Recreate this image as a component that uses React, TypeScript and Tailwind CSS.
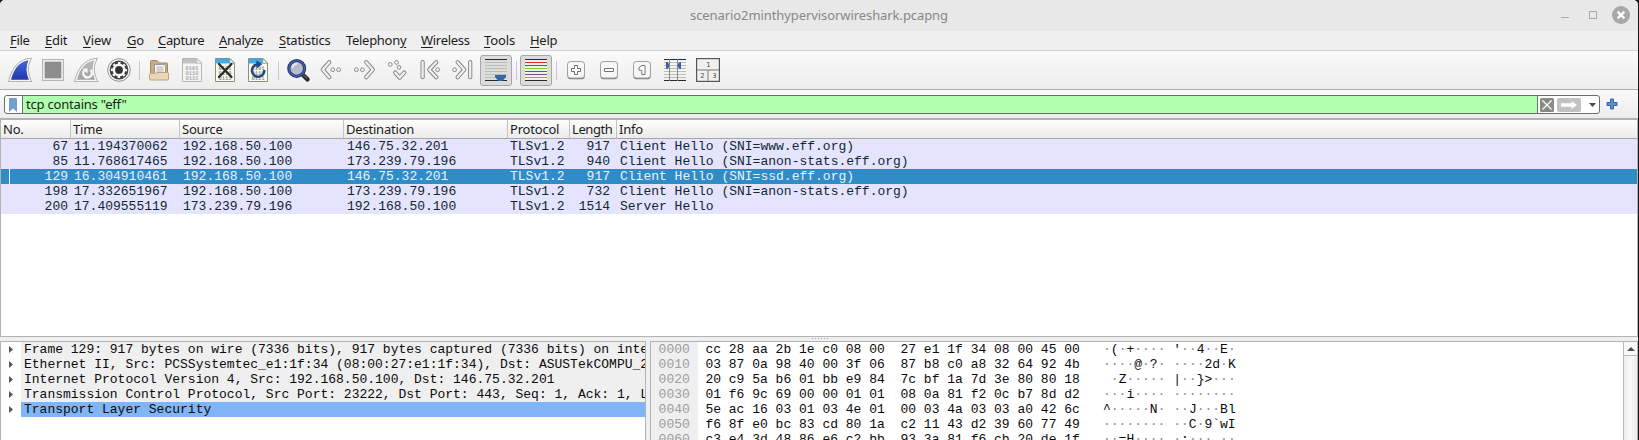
import React from "react";

const UI = "font-['Noto_Sans',sans-serif]";
const MONO = "font-['Liberation_Mono',monospace] text-[13px] leading-[15px] whitespace-pre";

const MENUS = [
  { label: "File", key: 0, box: "w-[35px]", text: "tracking-[-0.3px]" },
  { label: "Edit", key: 0, box: "w-[38px]", text: "tracking-[-0.25px]" },
  { label: "View", key: 0, box: "w-[44px]", text: "tracking-[-0.1px]" },
  { label: "Go", key: 0, box: "w-[31px]", text: "tracking-[-0.3px]" },
  { label: "Capture", key: 0, box: "w-[61px]", text: "tracking-[-0.35px]" },
  { label: "Analyze", key: 0, box: "w-[60px]", text: "tracking-[-0.4px]" },
  { label: "Statistics", key: 0, box: "w-[67px]", text: "tracking-[-0.25px]" },
  { label: "Telephony", key: 8, box: "w-[75px]", text: "tracking-[-0.3px]" },
  { label: "Wireless", key: 0, box: "w-[63px]", text: "tracking-[-0.3px]" },
  { label: "Tools", key: 0, box: "w-[46px]", text: "tracking-[-0.1px]" },
  { label: "Help", key: 0, box: "w-[40px]", text: "tracking-[-0.3px]" },
];

const PACKETS = [
  ["67", "11.194370062", "192.168.50.100", "146.75.32.201", "TLSv1.2", "917", "Client Hello (SNI=www.eff.org)"],
  ["85", "11.768617465", "192.168.50.100", "173.239.79.196", "TLSv1.2", "940", "Client Hello (SNI=anon-stats.eff.org)"],
  ["129", "16.304910461", "192.168.50.100", "146.75.32.201", "TLSv1.2", "917", "Client Hello (SNI=ssd.eff.org)"],
  ["198", "17.332651967", "192.168.50.100", "173.239.79.196", "TLSv1.2", "732", "Client Hello (SNI=anon-stats.eff.org)"],
  ["200", "17.409555119", "173.239.79.196", "192.168.50.100", "TLSv1.2", "1514", "Server Hello"],
];
const SELECTED = "129";

const TREE = [
  "Frame 129: 917 bytes on wire (7336 bits), 917 bytes captured (7336 bits) on inte",
  "Ethernet II, Src: PCSSystemtec_e1:1f:34 (08:00:27:e1:1f:34), Dst: ASUSTekCOMPU_2",
  "Internet Protocol Version 4, Src: 192.168.50.100, Dst: 146.75.32.201",
  "Transmission Control Protocol, Src Port: 23222, Dst Port: 443, Seq: 1, Ack: 1, L",
  "Transport Layer Security",
];

const HEX = [
  ["0000", "cc 28 aa 2b 1e c0 08 00  27 e1 1f 34 08 00 45 00", "·(·+···· '··4··E·"],
  ["0010", "03 87 0a 98 40 00 3f 06  87 b8 c0 a8 32 64 92 4b", "····@·?· ····2d·K"],
  ["0020", "20 c9 5a b6 01 bb e9 84  7c bf 1a 7d 3e 80 80 18", " ·Z····· |··}>···"],
  ["0030", "01 f6 9c 69 00 00 01 01  08 0a 81 f2 0c b7 8d d2", "···i···· ········"],
  ["0040", "5e ac 16 03 01 03 4e 01  00 03 4a 03 03 a0 42 6c", "^·····N· ··J···Bl"],
  ["0050", "f6 8f e0 bc 83 cd 80 1a  c2 11 43 d2 39 60 77 49", "········ ··C·9`wI"],
  ["0060", "c3 e4 3d 48 86 e6 c2 bb  93 3a 81 f6 cb 20 de 1f", "··=H···· ·:··· ··"],
];

function Icon({ children }: { children: React.ReactNode }) {
  return (
    <svg className="h-[38px] w-[33px] shrink-0" viewBox="0 0 33 38" fill="none">
      {children}
    </svg>
  );
}

function Separator({ wide = false }: { wide?: boolean }) {
  return (
    <div className={wide ? "flex w-2 shrink-0 justify-center" : "flex w-[7px] shrink-0 justify-center"}>
      <div className="mt-[10px] h-[19px] w-px bg-[#c9c9c9]" />
    </div>
  );
}

const FIN = "M6 29.6C8.6 18.5 15 9.3 25.6 8.4C22.4 15 22.4 22 26 29.6Z";

function Fin({ color, id }: { color: [string, string]; id: string }) {
  return (
    <>
      <defs>
        <linearGradient id={id} x1="0" y1="0" x2="0" y2="1">
          <stop offset="0" stopColor={color[0]} />
          <stop offset="1" stopColor={color[1]} />
        </linearGradient>
      </defs>
      <path d={FIN} stroke="#a2a2a2" strokeWidth="3" strokeLinejoin="miter" />
      <path d={FIN} fill={`url(#${id})`} stroke="#f5f5f5" strokeWidth="1.5" />
    </>
  );
}

function DataFile({ muted = false }: { muted?: boolean }) {
  return (
    <>
      <path d="M6.5 7.5H21L25.5 12V30.5H6.5Z" fill={muted ? "#f4f4f4" : "#fbfcec"} stroke={muted ? "#b5b5b5" : "#8d8d86"} />
      <path d="M7 8H20.5L24 12.5H7Z" fill={muted ? "#c2c2c2" : "#3daee9"} />
      <path d="M20.8 7.7V12.2H25.3Z" fill="#fafafa" stroke={muted ? "#b5b5b5" : "#8d8d86"} strokeWidth="0.7" />
      <g fill={muted ? "#a9a9a9" : "#8f9088"} className="font-['Liberation_Mono',monospace] text-[5.4px] font-bold">
        <text x="9.6" y="18.6">0101</text>
        <text x="9.6" y="23.5">0110</text>
        <text x="9.6" y="28.6">0111</text>
      </g>
    </>
  );
}

function Chevron({ d, dots, bar }: { d: string; dots: number[][]; bar?: string }) {
  return (
    <>
      {[d, bar].map(
        (p) =>
          p && (
            <g key={p} strokeLinecap="round" strokeLinejoin="round">
              <path d={p} stroke="#858582" strokeWidth="4.2" />
              <path d={p} stroke="#f0f0f0" strokeWidth="2.3" />
            </g>
          ),
      )}
      {dots.map(([x, y]) => (
        <circle key={`${x}-${y}`} cx={x} cy={y} r="1.9" fill="#f4f4f4" stroke="#8b8b88" strokeWidth="1" />
      ))}
    </>
  );
}

function KeyCap({ children }: { children: React.ReactNode }) {
  return (
    <Icon>
      <rect x="7.5" y="10.8" width="17.2" height="17.4" rx="3" fill="#7d7d7d" />
      <rect x="7.5" y="10.5" width="17" height="16.5" rx="3" fill="#f6f6f6" stroke="#a0a0a0" />
      {children}
    </Icon>
  );
}

function Toggle({ children }: { children: React.ReactNode }) {
  return (
    <div className="mt-1 flex h-[31px] w-8 shrink-0 items-center justify-center rounded-[3px] border border-[#a6a6a6] bg-[#dcdcdc]">
      <svg className="h-[23px] w-[22px]" viewBox="0 0 22 23">
        {children}
      </svg>
    </div>
  );
}

function Toolbar() {
  return (
    <div className="flex h-[38px] shrink-0 bg-linear-to-b from-[#fafafa] to-[#ededed] pl-1">
      <Icon>
        <Fin id="fin-start" color={["#4668dc", "#1f36a8"]} />
      </Icon>
      <Icon>
        <rect x="5.6" y="8.6" width="20.8" height="20.8" fill="#f4f4f4" stroke="#b2b2b2" strokeWidth="1.1" />
        <rect x="8" y="11" width="16" height="16" fill="#8d8d8d" stroke="#858585" strokeWidth="0.6" />
      </Icon>
      <Icon>
        <Fin id="fin-restart" color={["#bcbcbc", "#a2a2a2"]} />
        <path d="M14.1 19.6A4.3 4.3 0 1 0 20.5 19" stroke="#fafafa" strokeWidth="2.3" />
        <path d="M12.3 17.5H17.5V22.6Z" fill="#fafafa" />
      </Icon>
      <Icon>
        <circle cx="16" cy="19" r="11.3" fill="#fafafa" stroke="#8e8e8e" strokeWidth="1" />
        <circle cx="16" cy="19" r="9.4" fill="#3d3f40" />
        <circle cx="16" cy="19" r="5.2" fill="#3d3f40" stroke="#fafafa" strokeWidth="2.5" />
        <circle cx="16" cy="19" r="7.1" stroke="#fafafa" strokeWidth="2" strokeDasharray="2.5 3.08" strokeDashoffset="1.2" />
        <circle cx="16" cy="19" r="3" fill="#2e3031" />
      </Icon>
      <Separator />
      <Icon>
        <path d="M7.5 26V10.5Q7.5 9.5 8.5 9.5H14L16 12H23.5Q24.5 12 24.5 13V26Z" fill="#c5ae86" stroke="#a08a66" />
        <path d="M11.5 13.5H21L22.5 15V24H11.5Z" fill="#fafafa" stroke="#8b877d" strokeWidth="0.8" />
        <path d="M13.3 16H20.5M13.3 18H20.5M13.3 20H20.5" stroke="#999" strokeWidth="0.8" />
        <path d="M6.5 23.5Q6.5 22.5 7.5 22.5H12.5L14 21.5H24.5Q25.5 21.5 25.5 22.5V28Q25.5 29 24.5 29H7.5Q6.5 29 6.5 28Z" fill="#ead7b7" stroke="#bca681" />
      </Icon>
      <Icon>
        <DataFile muted />
      </Icon>
      <Icon>
        <DataFile />
        <path d="M10 13L22.5 26M22.5 13L10 26" stroke="#272c2e" strokeWidth="2.3" strokeLinecap="round" />
      </Icon>
      <Icon>
        <DataFile />
        <path d="M15 13.4A6.2 6.2 0 1 0 22.3 19" stroke="#1f4a87" strokeWidth="2.5" />
        <path d="M14.3 9.5L20.4 13L14.6 17.5Z" fill="#1f4a87" />
      </Icon>
      <Separator />
      <Icon>
        <path d="M21 24L25.5 28.4" stroke="#2d2d2d" strokeWidth="4.4" strokeLinecap="round" />
        <path d="M21 23.5L25 27.2" stroke="#7a7a7a" strokeWidth="1" />
        <circle cx="14.7" cy="17.4" r="7.9" fill="#b6bccb" stroke="#26366f" strokeWidth="3.2" />
        <circle cx="14.7" cy="17.4" r="7.8" stroke="#4865b4" strokeWidth="1.2" />
        <path d="M10.3 17Q11 13 15.5 12.7" stroke="#e9edf6" strokeWidth="1.8" />
      </Icon>
      <Icon>
        <Chevron d="M14.3 11.2L7.7 18.7L14.3 26.2" dots={[[17.7, 18.7], [23.6, 18.7]]} />
      </Icon>
      <Icon>
        <Chevron d="M18.2 11.2L24.8 18.7L18.2 26.2" dots={[[8.4, 18.7], [14.4, 18.7]]} />
      </Icon>
      <Icon>
        <Chevron d="M14.2 21.6L18.6 26.6L23.2 21.6" dots={[[9.3, 13.4], [15.5, 11.4], [18, 16.4]]} />
      </Icon>
      <Icon>
        <Chevron d="M22.3 11.2L15.2 18.7L22.3 26.2" bar="M8.6 11.2V26.2" dots={[[23.6, 18.7]]} />
      </Icon>
      <Icon>
        <Chevron d="M10.6 11.2L17.3 18.7L10.6 26.2" bar="M23.2 11.2V26.2" dots={[[7.6, 18.7]]} />
      </Icon>
      <Toggle>
        <path d="M0 3.5H22M0 6.5H22M0 9.5H22M0 12.5H22M0 15.5H22M0 18.5H22" stroke="#babdb6" />
        <path d="M0 .5H22M0 21.5H22" stroke="#24292b" />
        <path d="M10 16H21V18L17.5 22H13.5L10 18Z" fill="#3465a4" />
      </Toggle>
      <Separator wide />
      <Toggle>
        <rect y="1" width="22" height="20" fill="#f0f0ee" />
        <path d="M0 .5H22M0 21.5H22" stroke="#24292b" />
        <path d="M0 3.5H22" stroke="#ef2929" />
        <path d="M0 6.5H22M0 12.5H22" stroke="#3465a4" />
        <path d="M0 9.5H22" stroke="#73d216" />
        <path d="M0 15.5H22" stroke="#75507b" />
        <path d="M0 18.5H22" stroke="#c4a000" />
      </Toggle>
      <Separator wide />
      <KeyCap>
        <path d="M14.5 14.5H17.5V17.5H20.5V20.5H17.5V23.5H14.5V20.5H11.5V17.5H14.5Z" fill="#fff" stroke="#6f716d" />
      </KeyCap>
      <KeyCap>
        <path d="M11.5 17.5H20.5V20.5H11.5Z" fill="#fff" stroke="#6f716d" />
      </KeyCap>
      <KeyCap>
        <path d="M15.2 14.5H19V23.5H15.8V19.3H13V16.6Q14.9 16.2 15.2 14.5Z" fill="#fff" stroke="#777" />
      </KeyCap>
      <Icon>
        <path d="M5 11.5H27M5 14.5H27M5 17.5H27M5 20.5H27M5 23.5H27M5 26.5H27" stroke="#babdb6" />
        <path d="M5 8.5H27M5 29.5H27" stroke="#24292b" />
        <path d="M10.5 8V30M18.5 8V30" stroke="#888a85" />
        <path d="M7 11H8.5L10 13V16L8.5 18H7ZM22 11H20.5L19 13V16L20.5 18H22Z" fill="#3465a4" />
      </Icon>
      <Icon>
        <rect x="4.6" y="7.6" width="22.8" height="22.8" fill="#f0f0ee" stroke="#555759" strokeWidth="1.2" />
        <path d="M5 19H27M16 19V30" stroke="#9b9d99" strokeWidth="1.4" />
        <g fill="#4c4e4f" textAnchor="middle" className="font-['DejaVu_Sans',sans-serif] text-[6.8px]">
          <text x="16.3" y="16">1</text>
          <text x="10.4" y="27.3">2</text>
          <text x="22.4" y="27.3">3</text>
        </g>
      </Icon>
    </div>
  );
}

function FilterBar() {
  return (
    <div className="flex h-7 shrink-0 items-start border-t border-[#b0b0b0] bg-linear-to-b from-[#fafafa] to-[#ededed] pt-[5px] pl-1">
      <div className="flex h-[19px] w-[1596px] overflow-hidden rounded-[3px] border border-[#6f6f6f] bg-white">
        <div className="flex w-[18px] items-center border-r border-[#6f6f6f] pl-1">
          <svg className="h-[14px] w-2" viewBox="0 0 8 14">
            <path d="M0 1Q0 0 1 0H7Q8 0 8 1V14L4 10.5L0 14Z" fill="#729fcf" />
          </svg>
        </div>
        <div className={`${UI} flex-1 bg-[#afffaf] pl-[3px] text-[13px] leading-[17px] tracking-[-0.2px] whitespace-pre text-[#1c1c1c]`}>
          tcp contains "eff"
        </div>
        <div className="flex w-[62px] items-center border-l border-[#6f6f6f] pl-[2px]">
          <svg className="h-[14px] w-[14px]" viewBox="0 0 14 14">
            <rect width="14" height="14" rx="1.5" fill="#888a85" />
            <path d="M2.5 2.5L11.5 11.5M11.5 2.5L2.5 11.5" stroke="#fff" strokeWidth="1.2" />
          </svg>
          <svg className="ml-[3px] h-[14px] w-6" viewBox="0 0 24 14">
            <rect width="24" height="14" rx="2" fill="#c2c2c2" />
            <path d="M4 5.2H14.5V3L20 7L14.5 11V8.8H4Z" fill="#fff" />
          </svg>
          <svg className="ml-2 h-1 w-[7px]" viewBox="0 0 7 4">
            <path d="M0 0H7L3.5 4Z" fill="#4a4a4a" />
          </svg>
        </div>
      </div>
      <svg className="mt-[3px] ml-[6px] h-3 w-3" viewBox="0 0 12 12">
        <path d="M4.5 1H7.5V4.5H11V7.5H7.5V11H4.5V7.5H1V4.5H4.5Z" fill="#5f8fca" stroke="#3465a4" strokeLinejoin="round" />
      </svg>
    </div>
  );
}

function PacketList() {
  const head = "shrink-0 border-r border-[#c4c4c4] pl-[2px]";
  return (
    <div className="flex h-[219px] shrink-0 flex-col border-t-2 border-r border-b border-l border-[#b2b2b2] bg-white">
      <div className={`${UI} flex h-[19px] shrink-0 border-b border-[#a6a6a6] bg-linear-to-b from-[#fdfdfd] to-[#ebebeb] text-[13px] leading-[18px] tracking-[-0.2px] text-[#1c1c1c]`}>
        <div className="w-[70px] shrink-0 border-r border-[#c4c4c4] pl-[2px]">No.</div>
        <div className={`${head} w-[109px]`}>Time</div>
        <div className={`${head} w-[164px]`}>Source</div>
        <div className={`${head} w-[164px]`}>Destination</div>
        <div className={`${head} w-[62px]`}>Protocol</div>
        <div className={`${head} w-[47px] tracking-[-0.4px]`}>Length</div>
        <div className="pl-[2px]">Info</div>
      </div>
      {PACKETS.map((p) => (
        <div
          key={p[0]}
          className={`${MONO} flex h-[15px] shrink-0 ${p[0] === SELECTED ? "bg-[#308cc6] text-[#e8f3fb]" : "bg-[#e4e4ff] text-[#12272e]"}`}
        >
          <div className="flex w-[67px] shrink-0">
            {p[0] === SELECTED && <div className="ml-2 w-px bg-white" />}
            <div className="flex-1 text-right">{p[0]}</div>
          </div>
          <div className="w-[109px] shrink-0 pl-[6px]">{p[1]}</div>
          <div className="w-[164px] shrink-0 pl-[6px]">{p[2]}</div>
          <div className="w-[164px] shrink-0 pl-[6px]">{p[3]}</div>
          <div className="w-[62px] shrink-0 pl-[5px]">{p[4]}</div>
          <div className="w-[43px] shrink-0 text-right">{p[5]}</div>
          <div className="pl-[10px]">{p[6]}</div>
        </div>
      ))}
    </div>
  );
}

function DetailTree() {
  return (
    <div className="flex w-[646px] shrink-0 flex-col overflow-hidden border-t border-r border-l border-[#b2b2b2] bg-white">
      {TREE.map((line, i) => (
        <div key={line} className="flex h-[15px] shrink-0">
          <div className="flex w-5 shrink-0 items-center pl-2">
            <svg className="h-[7px] w-1" viewBox="0 0 4 7">
              <path d="M0 0L4 3.5L0 7Z" fill="#555" />
            </svg>
          </div>
          <div className={`${MONO} w-[624px] shrink-0 overflow-hidden pl-[3px] text-[#0a0a0a] ${i === 4 ? "bg-[#80b5f7]" : "bg-[#efefef]"}`}>
            {line}
          </div>
        </div>
      ))}
    </div>
  );
}

function HexView() {
  return (
    <div className="flex flex-1 overflow-hidden border-t border-r border-l border-[#b2b2b2] bg-white">
      <div className={`${MONO} w-[47px] shrink-0 bg-[#efefef] pl-[7.6px] text-[#9c9c9c]`}>
        {HEX.map((r) => (
          <div key={r[0]}>{r[0]}</div>
        ))}
      </div>
      <div className={`${MONO} w-[405px] shrink-0 pl-[7.4px] text-[#0a0a0a]`}>
        {HEX.map((r) => (
          <div key={r[0]}>{r[1]}</div>
        ))}
      </div>
      <div className={`${MONO} flex-1 text-[#0a0a0a]`}>
        {HEX.map((r) => (
          <div key={r[0]}>
            {r[2].split(/(·+)/).map((part, i) => (
              <span key={i} className={part.startsWith("·") ? "text-[#8c8c8c]" : ""}>
                {part}
              </span>
            ))}
          </div>
        ))}
      </div>
      <div className="flex w-[14px] shrink-0 flex-col border-l border-[#b8b8b8] bg-linear-to-r from-[#ececec] via-[#f8f8f8] to-[#ececec]">
        <div className="flex h-[14px] shrink-0 items-center justify-center border-b border-[#b8b8b8] bg-[#f8f8f8]">
          <svg className="h-1 w-2" viewBox="0 0 8 4">
            <path d="M0 4L4 0L8 4Z" fill="#4f4f4f" />
          </svg>
        </div>
      </div>
    </div>
  );
}

export default function App() {
  return (
    <div className="h-[440px] w-[1639px] overflow-hidden bg-[#161616] pr-px">
      <div className="flex h-full flex-col overflow-hidden rounded-t-[5px] bg-[#efefef]">
        <div className="flex h-[31px] shrink-0 items-start bg-[#e8e8e8]">
          <div className={`${UI} flex-1 pl-[690px] text-[13px] leading-[30px] tracking-[-0.08px] text-[#878787]`}>
            scenario2minthypervisorwireshark.pcapng
          </div>
          <svg className="h-[31px] w-[82px]" viewBox="0 0 82 31" fill="none">
            <path d="M5 17.5H13" stroke="#a8a8a8" />
            <rect x="33.5" y="11.5" width="7" height="7" stroke="#a8a8a8" />
            <circle cx="65" cy="15" r="9" fill="#a8a8a8" />
            <path d="M61.6 11.6L68.4 18.4M68.4 11.6L61.6 18.4" stroke="#fff" strokeWidth="2.2" />
          </svg>
        </div>
        <div className={`${UI} flex h-5 shrink-0 border-b border-[#d2d2d2] pl-[10px] text-[13px] leading-[19px] text-[#1c1c1c]`}>
          {MENUS.map((m) => (
            <div key={m.label} className={`${m.box} ${m.text} shrink-0 whitespace-nowrap`}>
              {m.label.slice(0, m.key)}
              <span className="underline underline-offset-2">{m.label[m.key]}</span>
              {m.label.slice(m.key + 1)}
            </div>
          ))}
        </div>
        <Toolbar />
        <FilterBar />
        <div className="h-px shrink-0 bg-[#ededed]" />
        <PacketList />
        <div className="flex h-1 shrink-0 pl-[811px]">
          <svg className="h-1 w-[17px]" viewBox="0 0 17 4">
            <path d="M1 1.5H17" stroke="#a0a0a0" strokeDasharray="1 2" />
          </svg>
        </div>
        <div className="flex flex-1 gap-1 overflow-hidden">
          <DetailTree />
          <HexView />
        </div>
      </div>
    </div>
  );
}
